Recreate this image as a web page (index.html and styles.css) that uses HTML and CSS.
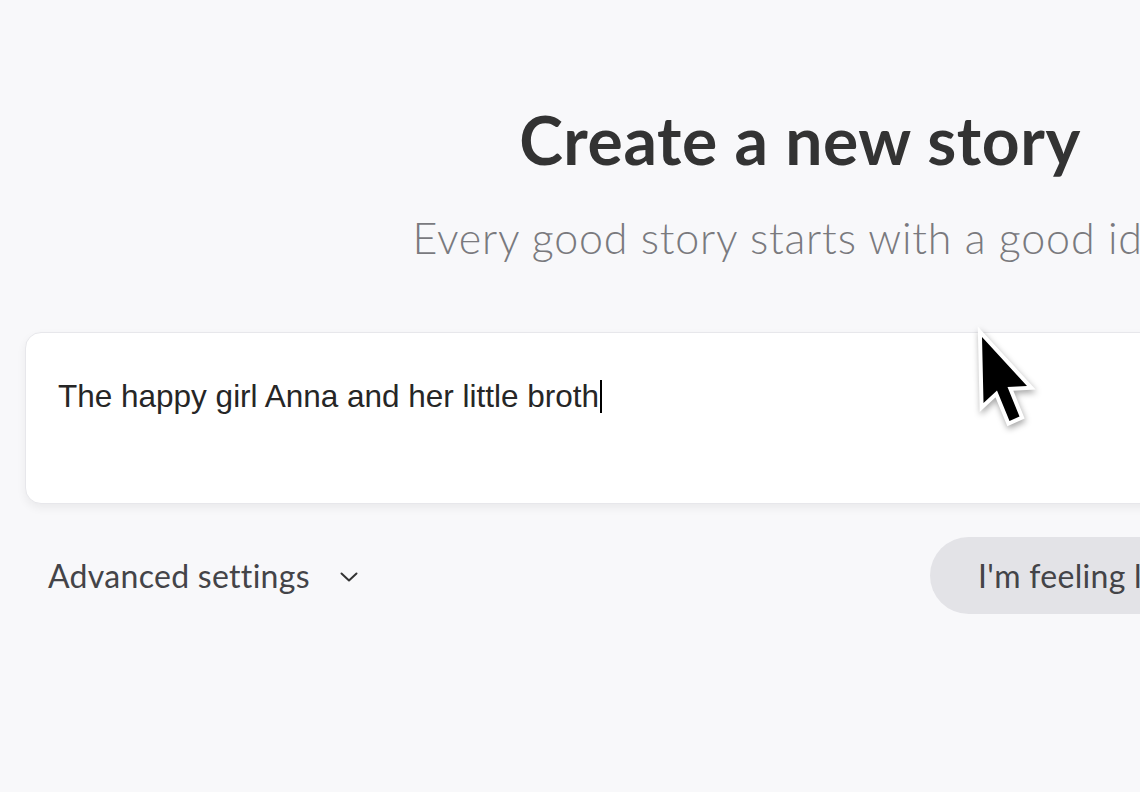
FILE: index.html
```html
<!DOCTYPE html>
<html lang="en">
<head>
<meta charset="utf-8">
<title>Create a new story</title>
<link rel="stylesheet" href="styles.css">
</head>
<body>
<div class="viewport">
  <main class="page">
    <h1 class="title">Create a new story</h1>
    <p class="subtitle">Every good story starts with a good idea</p>
    <div class="card">
      <p class="prompt">The happy girl Anna and her little broth<span class="caret"></span></p>
    </div>
    <div class="actions">
      <button class="advanced" type="button">Advanced settings
        <svg class="chev" width="18" height="10" viewBox="0 0 18 10"><path d="M1.5 1.5 L9 8.5 L16.5 1.5" fill="none" stroke="#333" stroke-width="2" stroke-linecap="round" stroke-linejoin="round"/></svg>
      </button>
      <div class="buttons">
        <button class="pill lucky" type="button">I'm feeling lucky</button>
        <button class="pill create" type="button">Create story</button>
      </div>
    </div>
  </main>
  <svg class="cursor" width="80" height="120" viewBox="0 0 80 120">
    <path d="M12 17 L13.5 83 L27 70.5 L39.5 101 L49.5 96.5 L37.5 67 L57 66 Z" fill="#000" stroke="#fff" stroke-width="8" stroke-linejoin="miter" paint-order="stroke"/>
  </svg>
</div>
</body>
</html>
```
FILE: styles.css
```css
* { box-sizing: border-box; }
html, body { margin: 0; padding: 0; }
body {
  background: #f8f8fa;
  width: 1140px;
  height: 792px;
  overflow: hidden;
}
.viewport {
  position: relative;
  width: 1140px;
  height: 792px;
  overflow: hidden;
}
.page {
  width: 1550px;
  margin-left: 25px;
  padding-top: 100px;
  display: flex;
  flex-direction: column;
  align-items: center;
  font-family: Lato, "Open Sans", sans-serif;
}
.title {
  margin: 0;
  font-size: 66px;
  line-height: 79px;
  font-weight: 700;
  color: #333333;
  letter-spacing: 0.6px;
  white-space: nowrap;
}
.subtitle {
  margin: 33px 0 0;
  font-size: 43px;
  line-height: 52px;
  font-weight: 300;
  color: #7a7a7e;
  letter-spacing: 0.8px;
  white-space: nowrap;
}
.card {
  align-self: stretch;
  margin-top: 68px;
  height: 172px;
  background: #ffffff;
  border: 1px solid #e7e7eb;
  border-radius: 16px;
  box-shadow: 0 4px 10px rgba(0, 0, 0, 0.06);
  padding: 45px 32px 0;
}
.prompt {
  margin: 0;
  font-family: "Liberation Sans", Arial, sans-serif;
  font-size: 31.5px;
  line-height: 36px;
  color: #262626;
  white-space: nowrap;
  display: flex;
  align-items: center;
}
.caret {
  display: inline-block;
  width: 2px;
  height: 33px;
  background: #000;
  margin-left: 1px;
}
.actions {
  align-self: stretch;
  margin-top: 33px;
  display: flex;
  align-items: center;
  justify-content: space-between;
}
.advanced {
  margin-left: 23px;
  background: none;
  border: 0;
  padding: 0;
  font-family: Lato, "Open Sans", sans-serif;
  font-size: 32px;
  letter-spacing: 0.3px;
  color: #444448;
  display: flex;
  align-items: center;
  gap: 30px;
  cursor: pointer;
}
.chev { margin-top: 2px; }
.buttons {
  display: flex;
  gap: 20px;
}
.pill {
  height: 77px;
  border-radius: 39px;
  border: 0;
  padding: 0 48px;
  font-family: Lato, "Open Sans", sans-serif;
  font-size: 32px;
  letter-spacing: 0.3px;
  white-space: nowrap;
}
.lucky {
  background: #e3e3e7;
  color: #444448;
}
.create {
  background: #333333;
  color: #ffffff;
  width: 298px;
}
.cursor {
  position: absolute;
  left: 970px;
  top: 320px;
  filter: drop-shadow(1px 3px 3px rgba(0, 0, 0, 0.35));
}
```
